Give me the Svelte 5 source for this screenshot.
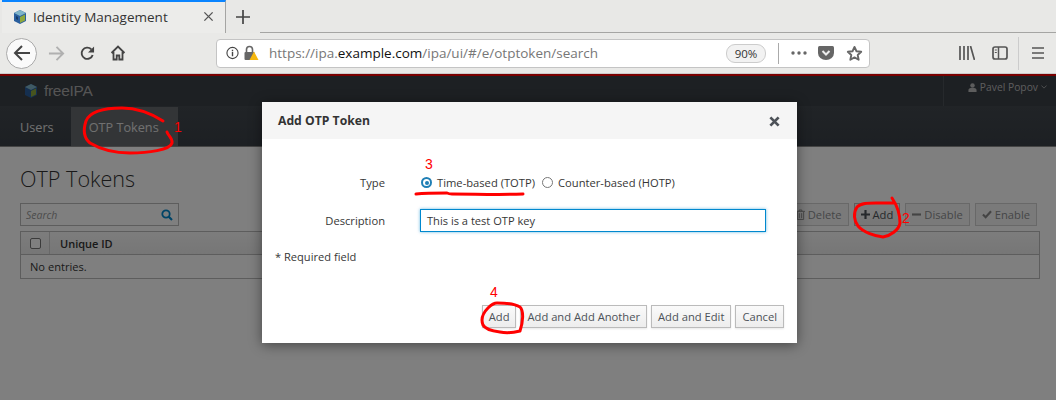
<script>
  const tools = [
    { label: 'Delete', icon: 'trash', off: true },
    { label: 'Add', icon: 'plus' },
    { label: 'Disable', icon: 'minus', off: true },
    { label: 'Enable', icon: 'check', off: true }
  ];
  const actions = ['Add', 'Add and Add Another', 'Add and Edit', 'Cancel'];
</script>

<div class="root">
  <header class="browser">
    <div class="tabstrip">
      <div class="tab">
        <svg class="favicon" viewBox="0 0 16 16" width="16" height="16">
          <path d="M8 1l6 3v8l-6 3-6-3V4z" fill="#2a5f9e" />
          <path d="M8 1l6 3-6 3-6-3z" fill="#7fb4c9" />
          <path d="M8 8l5-2.500v6L8 14z" fill="#8fa83c" />
          <path d="M4 7l2 1v3l-2-1z" fill="#173a66" />
        </svg>
        <span class="tabtitle">Identity Management</span>
        <svg class="close" viewBox="0 0 12 12" width="11" height="11"><path d="M1.500 1.500l9 9M10.500 1.500l-9 9" stroke="#555" stroke-width="1.500" fill="none" /></svg>
      </div>
      <svg class="newtab" viewBox="0 0 14 14" width="14" height="14"><path d="M7 0v14M0 7h14" stroke="#444" stroke-width="1.700" /></svg>
      <div class="tabfill"></div>
    </div>
    <div class="navbar">
      <div class="back">
        <svg viewBox="0 0 18 18" width="18" height="18"><path d="M17 9H2M9 2L2 9l7 7" stroke="#444" stroke-width="2" fill="none" /></svg>
      </div>
      <svg class="fwd" viewBox="0 0 18 18" width="17" height="17"><path d="M1 9h15M9 2l7 7-7 7" stroke="#b0b0b0" stroke-width="2" fill="none" /></svg>
      <svg class="reload" viewBox="0 0 16 16" width="15" height="15"><path d="M13.500 9.500A6 6 0 1 1 12 3.500" stroke="#444" stroke-width="2" fill="none" /><path d="M15 0.500v6.500H8.500z" fill="#444" /></svg>
      <svg class="home" viewBox="0 0 16 16" width="16" height="16"><path d="M1.500 8L8 1.500 14.500 8M3.500 7v7.500h3.200v-4h2.600v4h3.200V7" stroke="#444" stroke-width="1.800" fill="none" /></svg>
      <div class="urlbar">
        <svg class="info" viewBox="0 0 14 14" width="14" height="14"><circle cx="7" cy="7" r="6" stroke="#444" stroke-width="1.200" fill="none" /><path d="M7 6v4.500M7 3.500v1.500" stroke="#444" stroke-width="1.500" /></svg>
        <svg class="lock" viewBox="0 0 16 16" width="16" height="16">
          <path d="M3.500 7V4.500a3 3 0 0 1 6 0V7" stroke="#666" stroke-width="1.600" fill="none" />
          <rect x="1.500" y="7" width="10" height="8" rx="1" fill="#666" />
          <path d="M11 6.500l4.500 8.500h-9z" fill="#f5b70f" />
        </svg>
        <span class="url">https://ipa.<b>example.com</b>/ipa/ui/#/e/otptoken/search</span>
        <span class="zoomlevel">90%</span>
        <span class="urlsep"></span>
        <svg class="dots" viewBox="0 0 16 4" width="16" height="4"><circle cx="2" cy="2" r="1.700" fill="#666" /><circle cx="8" cy="2" r="1.700" fill="#666" /><circle cx="14" cy="2" r="1.700" fill="#666" /></svg>
        <svg class="pocket" viewBox="0 0 16 16" width="16" height="16"><path d="M0 2.500Q0 1 1.500 1h13Q16 1 16 2.500V8a8 7 0 0 1-16 0z" fill="#666" /><path d="M4.500 6l3.500 3.500L11.500 6" stroke="#eee" stroke-width="2" fill="none" /></svg>
        <svg class="star" viewBox="0 0 18 18" width="17" height="17"><path d="M9 2l2.100 4.600 5 .6-3.700 3.400 1 5L9 13.100l-4.400 2.500 1-5L1.900 7.200l5-.6z" stroke="#666" stroke-width="2" fill="none" stroke-linejoin="round" /></svg>
      </div>
      <svg class="library" viewBox="0 0 16 14" width="16" height="14"><path d="M1 0v14M5 0v14M9 0v14M11.500 0l4 14" stroke="#555" stroke-width="1.700" /></svg>
      <svg class="sidebar" viewBox="0 0 16 14" width="16" height="14"><rect x="1" y="1" width="14" height="12" rx="2" stroke="#555" stroke-width="1.700" fill="none" /><path d="M6.500 1v12" stroke="#555" stroke-width="1.500" /><path d="M2.800 4h2M2.800 6.500h2" stroke="#555" /></svg>
      <span class="navsep"></span>
      <svg class="burger" viewBox="0 0 12 12" width="12" height="12"><path d="M0 1h12M0 6h12M0 11h12" stroke="#555" stroke-width="1.700" /></svg>
    </div>
  </header>

  <div class="app">
    <div class="masthead">
      <svg class="logo" viewBox="0 0 16 16" width="16" height="16">
        <path d="M8 1l6 3v8l-6 3-6-3V4z" fill="#2a5f9e" />
        <path d="M8 1l6 3-6 3-6-3z" fill="#7fb4c9" />
        <path d="M8 8l5-2.500v6L8 14z" fill="#8fa83c" />
      </svg>
      <span class="brand">freeIPA</span>
      <div class="user">
        <svg viewBox="0 0 10 10" width="9" height="9"><circle cx="5" cy="2.800" r="2.500" fill="#bbb" /><path d="M0.500 10V7.500Q1 5.500 3 5.500h4q2 0 2.500 2V10z" fill="#bbb" /></svg>
        <span>Pavel Popov</span>
        <svg viewBox="0 0 8 5" width="6" height="4"><path d="M.5.500L4 4 7.500.500" stroke="#bbb" fill="none" /></svg>
      </div>
    </div>
    <nav class="menu">
      <span class="item">Users</span>
      <span class="item active">OTP Tokens</span>
    </nav>
    <main class="content">
      <h1>OTP Tokens</h1>
      <div class="toolbar">
        <div class="search">
          <span>Search</span>
          <svg viewBox="0 0 12 12" width="12" height="12"><circle cx="5" cy="5" r="3.700" stroke="#0088ce" stroke-width="1.800" fill="none" /><path d="M7.800 7.800L11 11" stroke="#0088ce" stroke-width="2.200" /></svg>
        </div>
        <div class="tools">
          {#each tools as t}
            <button class="tool" class:off={t.off}>
              {#if t.icon === 'trash'}
                <svg viewBox="0 0 10 12" width="9" height="11"><path d="M0 2.500h10M3.500 2.500V1h3v1.500M1.500 3v8.500h7V3M3.700 4.500v5.500M6.300 4.500v5.500" stroke="#888" fill="none" /></svg>
              {:else if t.icon === 'plus'}
                <svg viewBox="0 0 10 10" width="9" height="9"><path d="M5 0v10M0 5h10" stroke="#4d5258" stroke-width="2.400" /></svg>
              {:else if t.icon === 'minus'}
                <svg viewBox="0 0 10 10" width="9" height="9"><path d="M0 5h10" stroke="#888" stroke-width="2.400" /></svg>
              {:else}
                <svg viewBox="0 0 11 10" width="10" height="9"><path d="M1 5l3 3 6-6.500" stroke="#888" stroke-width="2.400" fill="none" /></svg>
              {/if}
              {t.label}
            </button>
          {/each}
        </div>
      </div>
      <div class="table">
        <div class="thead">
          <div class="cellcheck"><span class="checkbox"></span></div>
          <div class="th">Unique ID</div>
        </div>
        <div class="tbody">No entries.</div>
      </div>
    </main>
  </div>

  <div class="backdrop"></div>

  <div class="modal">
    <div class="modal-head">
      <h2>Add OTP Token</h2>
      <svg viewBox="0 0 12 12" width="11" height="11"><path d="M1.500 1.500l9 9M10.500 1.500l-9 9" stroke="#4d5258" stroke-width="3" /></svg>
    </div>
    <div class="modal-body">
      <div class="form">
        <div class="lbl type">Type</div>
        <div class="radios">
          <span class="radio on"></span><span class="rlabel">Time-based (TOTP)</span>
          <span class="radio"></span><span class="rlabel">Counter-based (HOTP)</span>
        </div>
        <div class="lbl">Description</div>
        <div class="input">This is a test OTP key</div>
      </div>
      <div class="required">* Required field</div>
    </div>
    <div class="modal-foot">
      {#each actions as a}
        <button class="action">{a}</button>
      {/each}
    </div>
  </div>

  <svg class="marks" viewBox="0 0 1056 400" width="1056" height="400">
    <g fill="none" stroke="#f00" stroke-width="3" stroke-linecap="round" stroke-linejoin="round">
      <path d="M163 121C152 114 138 108 122 108C105 108 90 111 86 121C83 130 84 138 90 143C100 149 115 153 130 153C148 153 170 150 172 143C173 138 168 136 167 132" />
      <path d="M892 198C896 204 900 214 900 223C899 230 890 236 883 237C874 236 863 232 858 226C854 221 853 213 857 207C861 203 868 203 876 203L895 203" />
      <path d="M416 194C426 193 438 193 447 193C449 194 450 194 452 194C475 194 500 195 523 194" />
      <path d="M497 303C505 303 515 304 520 307C524 311 523 322 520 331C512 333 505 333 500 332C492 331 485 329 483 325C481 320 482 314 488 308C491 305 494 303 497 303" />
    </g>
    <g class="num" fill="#f00">
      <text x="174" y="132">1</text>
      <text x="902" y="223">2</text>
      <text x="425" y="169">3</text>
      <text x="490" y="297">4</text>
    </g>
  </svg>
</div>

<style>
  :global(body) { margin: 0; background: #fff; }
  .root { position: relative; width: 1056px; height: 400px; overflow: hidden; font-family: "Open Sans", sans-serif; font-size: 11.100px; color: #363636; }
  .browser { height: 76px; background: #e8e8e6; box-sizing: border-box; }
  .tabstrip { display: flex; height: 33px; padding-left: 2px; box-sizing: border-box; }
  .tab { width: 224px; height: 33px; box-sizing: border-box; border-top: 2px solid #0a84ff; border-right: 1px solid #a5a5a3; background: #ececea; display: flex; align-items: center; padding: 0 11px 2px 10px; }
  .favicon { flex: none; }
  .tabtitle { margin-left: 5px; font-size: 13.500px; color: #333; flex: 1; }
  .newtab { margin: 0 0 0 10px; flex: none; align-self: center; }
  .tabfill { flex: 1; border-bottom: 1px solid #a5a5a3; margin-left: 10px; }
  .navbar { height: 43px; display: flex; align-items: center; border-bottom: 2px solid #7a0000; box-shadow: inset 0 -1px 0 #ccc; box-sizing: border-box; padding: 0 0 1px 6px; background: #e9e9e7; }
  .back { width: 31px; height: 31px; border: 1px solid #aaa; border-radius: 50%; background: #fafafa; display: flex; align-items: center; justify-content: center; box-sizing: border-box; flex: none; }
  .fwd { margin-left: 11px; flex: none; }
  .reload { margin-left: 15px; flex: none; }
  .home { margin-left: 15px; flex: none; }
  .urlbar { margin-left: 90px; width: 654px; height: 29px; box-sizing: border-box; background: #fff; border: 1px solid #c4c4c4; border-radius: 4px; display: flex; align-items: center; padding: 0 6px 0 9px; flex: none; }
  .lock { margin-left: 4px; flex: none; }
  .url { margin-left: 10px; font-size: 13.500px; color: #777; width: 448px; white-space: nowrap; flex: none; }
  .url b { font-weight: 400; color: #111; }
  .zoomlevel { margin-left: 9px; width: 38px; height: 17px; border: 1px solid #ccc; border-radius: 9px; background: #f2f2f2; text-align: center; line-height: 17px; font-size: 11.500px; color: #333; flex: none; }
  .urlsep { width: 1px; height: 21px; background: #aaa; margin-left: 12px; flex: none; }
  .dots { margin-left: 12px; flex: none; }
  .pocket { margin-left: 11px; flex: none; }
  .star { margin-left: 12px; flex: none; }
  .library { margin-left: 89px; flex: none; }
  .sidebar { margin-left: 17px; flex: none; }
  .navsep { width: 1px; height: 33px; background: #ccc; margin-left: 10px; flex: none; }
  .burger { margin-left: 13px; flex: none; }

  .app { height: 324px; display: flex; flex-direction: column; background: #fff; }
  .masthead { height: 31px; flex: none; background: #3a4047; display: flex; align-items: center; padding: 0 9px 0 23px; border-bottom: 1px solid #42484e; box-sizing: border-box; }
  .logo { flex: none; }
  .brand { margin-left: 5px; font-family: "Liberation Sans", sans-serif; font-size: 15.500px; color: #aaa; letter-spacing: -0.300px; }
  .user { margin-left: auto; height: 30px; border-left: 1px solid #4d5258; display: flex; align-items: center; gap: 3px; padding: 0 0 8px 24px; box-sizing: border-box; font-size: 10.300px; color: #bbb; }
  .menu { height: 40px; flex: none; display: flex; background: linear-gradient(#42484e, #3a4047); border-bottom: 1px solid #8a8a8a; box-sizing: border-box; }
  .item { display: flex; align-items: center; padding: 0 17px 0 20px; font-size: 12.700px; color: #e0e0e0; white-space: nowrap; }
  .item.active { background: #666b6f; padding: 0 18px; width: 107px; box-sizing: border-box; }
  .content { flex: 1; padding: 0 16px 0 20px; }
  h1 { margin: 17px 0 9px; font-size: 21.600px; font-weight: 300; line-height: 30px; color: #333; }
  .toolbar { display: flex; justify-content: space-between; align-items: center; padding-right: 3px; }
  .search { width: 159px; height: 23px; box-sizing: border-box; border: 1px solid #bbb; display: flex; align-items: center; justify-content: space-between; padding: 0 5px; background: #fff; font-style: italic; font-size: 10.500px; color: #999; }
  .tools { display: flex; gap: 5px; }
  .tool { height: 23px; box-sizing: border-box; border: 1px solid #bbb; background: linear-gradient(#fafafa, #ededed); font: inherit; font-weight: 500; font-size: 11.200px; color: #4d5258; padding: 0 6px; display: flex; align-items: center; gap: 3px; }
  .tool.off { color: #8b8d8f; background: #f5f5f5; border-color: #d1d1d1; }
  .table { margin-top: 5px; border: 1px solid #bbb; }
  .thead { height: 22px; display: flex; align-items: stretch; background: linear-gradient(#fafafa, #ededed); border-bottom: 1px solid #bbb; }
  .cellcheck { width: 29px; box-sizing: border-box; border-right: 1px solid #d1d1d1; display: flex; align-items: center; justify-content: center; }
  .checkbox { width: 9px; height: 9px; border: 1px solid #777; border-radius: 2px; background: #fff; }
  .th { padding-left: 10px; font-weight: 600; font-size: 11px; display: flex; align-items: center; color: #333; }
  .tbody { height: 23px; line-height: 23px; padding-left: 9px; }

  .backdrop { position: absolute; left: 0; right: 0; top: 76px; bottom: 0; background: rgba(0, 0, 0, 0.5); }
  .modal { position: absolute; left: 262px; top: 102px; width: 535px; height: 241px; background: #fff; display: flex; flex-direction: column; box-shadow: 0 2px 12px rgba(0, 0, 0, 0.45); }
  .modal-head { height: 37px; flex: none; background: #f5f5f5; display: flex; align-items: center; justify-content: space-between; padding: 0 17px 0 16px; }
  h2 { margin: 0; font-size: 12.200px; font-weight: 700; color: #333; }
  .modal-head svg { margin-top: 2px; }
  .modal-body { flex: 1; padding: 0 13px; }
  .form { display: grid; grid-template-columns: 110px 346px; column-gap: 35px; row-gap: 19px; align-items: center; margin-top: 36px; }
  .lbl { text-align: right; font-weight: 500; font-size: 11.200px; color: #363636; }
  .radios { display: flex; align-items: center; height: 14px; color: #363636; font-weight: 500; font-size: 11.200px; }
  .radio { width: 9px; height: 9px; border: 1px solid #777; border-radius: 50%; flex: none; margin-left: 1px; background: #fff; }
  .radio.on { width: 7px; height: 7px; border: 2px solid #1f7fb5; position: relative; }
  .radio.on::after { content: ""; position: absolute; inset: 1.500px; border-radius: 50%; background: #1f7fb5; }
  .rlabel { margin-left: 5px; margin-right: 6px; }
  .input { height: 23px; box-sizing: border-box; border: 1px solid #0088ce; box-shadow: 0 0 3px rgba(0, 136, 206, 0.6); line-height: 21px; padding-left: 6px; color: #363636; }
  .required { margin-top: 17px; color: #363636; }
  .modal-foot { flex: none; display: flex; justify-content: flex-end; gap: 4px; padding: 0 13px 15px 0; }
  .action { height: 23px; box-sizing: border-box; border: 1px solid #bbb; background: linear-gradient(#fafafa, #ededed); font: inherit; font-weight: 500; font-size: 11.200px; color: #4d5258; padding: 0 6px; box-shadow: 0 1px 2px rgba(0, 0, 0, 0.1); }
  .marks { position: absolute; left: 0; top: 0; pointer-events: none; }
  .num text { font-family: "Liberation Sans", sans-serif; font-size: 14px; }
</style>
